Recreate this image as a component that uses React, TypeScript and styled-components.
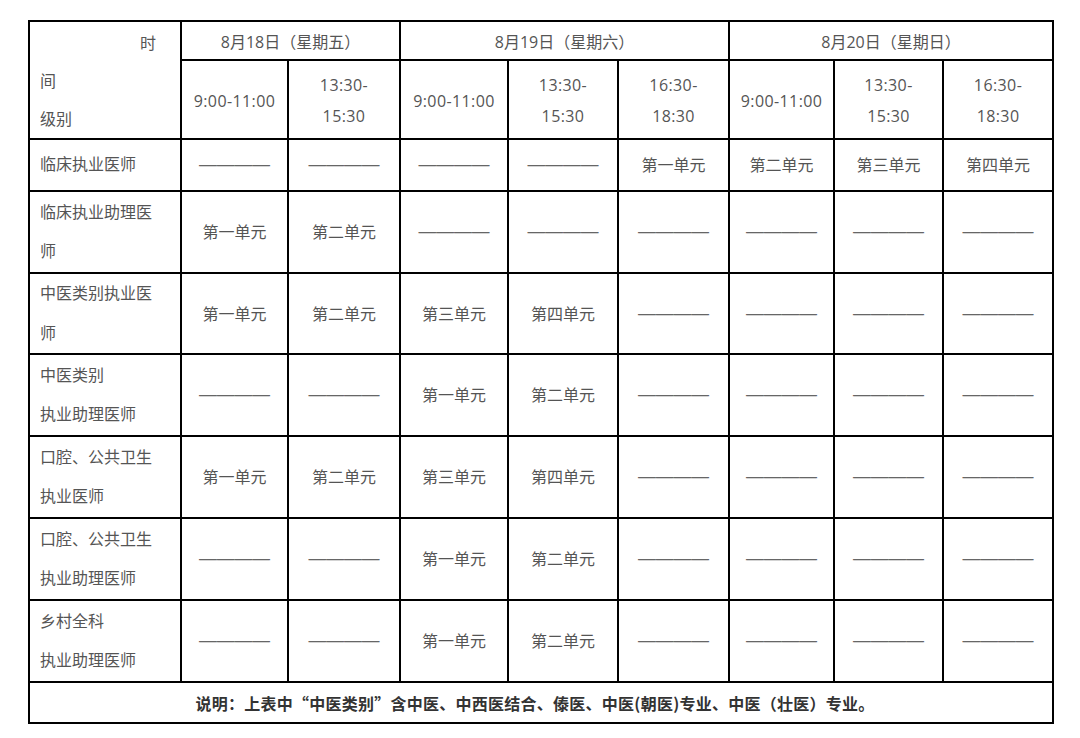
import React from "react";
import styled, { createGlobalStyle } from "styled-components";

const GlobalStyle = createGlobalStyle`
  html, body {
    margin: 0;
    padding: 0;
    background: #ffffff;
  }
  body {
    font-family: "Open Sans", "Noto Sans CJK SC", sans-serif;
  }
`;

const Page = styled.div`
  padding: 20px 0 0 28px;
  width: 1080px;
  height: 738px;
  box-sizing: border-box;
`;

const Table = styled.table`
  border-collapse: collapse;
  table-layout: fixed;
  width: 1025px;
  font-size: 16px;
  color: #555;
  border: 2px solid #111;
`;

const Cell = styled.td<{ $h?: number; $left?: boolean; $lh?: number; $pt?: number; $ls?: number }>`
  border: 2px solid #000;
  height: ${(p) => (p.$h ? `${p.$h}px` : "auto")};
  padding: ${(p) => p.$pt ?? 0}px ${(p) => (p.$left ? "10px" : "4px")} 0;
  text-align: ${(p) => (p.$left ? "left" : "center")};
  vertical-align: middle;
  line-height: ${(p) => p.$lh ?? 39.5}px;
  letter-spacing: ${(p) => p.$ls ?? 0}px;
  font-weight: 400;
  box-sizing: border-box;
  white-space: nowrap;
`;

const CornerLine = styled.div<{ $right?: boolean }>`
  text-align: ${(p) => (p.$right ? "right" : "left")};
  padding-right: ${(p) => (p.$right ? "14px" : "0")};
  line-height: 38px;
`;

const Line = styled.div``;

const Dash = styled.span`
  font-family: "Liberation Sans", sans-serif;
  font-size: 17.75px;
  color: #666;
`;

const Note = styled.td`
  border: 2px solid #000;
  height: 41px;
  text-align: center;
  vertical-align: middle;
  font-family: "Noto Sans CJK SC", sans-serif;
  font-weight: 700;
  color: #333;
  font-size: 16px;
  letter-spacing: 0.25px;
  padding: 0 12px 0 0;
  box-sizing: border-box;
`;

const colWidths = [152, 107, 112, 108, 110, 111, 105, 109, 110];

const times: string[][] = [
  ["9:00-11:00"],
  ["13:30-", "15:30"],
  ["9:00-11:00"],
  ["13:30-", "15:30"],
  ["16:30-", "18:30"],
  ["9:00-11:00"],
  ["13:30-", "15:30"],
  ["16:30-", "18:30"],
];

const days = [
  { label: "8月18日（星期五）", span: 2 },
  { label: "8月19日（星期六）", span: 3 },
  { label: "8月20日（星期日）", span: 3 },
];

const D = "—";
type Row = { label: string[]; h: number; cells: string[] };

const rows: Row[] = [
  { label: ["临床执业医师"], h: 52, cells: [D, D, D, D, "第一单元", "第二单元", "第三单元", "第四单元"] },
  { label: ["临床执业助理医", "师"], h: 82, cells: ["第一单元", "第二单元", D, D, D, D, D, D] },
  { label: ["中医类别执业医", "师"], h: 81, cells: ["第一单元", "第二单元", "第三单元", "第四单元", D, D, D, D] },
  { label: ["中医类别", "执业助理医师"], h: 82, cells: [D, D, "第一单元", "第二单元", D, D, D, D] },
  { label: ["口腔、公共卫生", "执业医师"], h: 82, cells: ["第一单元", "第二单元", "第三单元", "第四单元", D, D, D, D] },
  { label: ["口腔、公共卫生", "执业助理医师"], h: 82, cells: [D, D, "第一单元", "第二单元", D, D, D, D] },
  { label: ["乡村全科", "执业助理医师"], h: 82, cells: [D, D, "第一单元", "第二单元", D, D, D, D] },
];

export default function App() {
  return (
    <>
      <GlobalStyle />
      <Page>
        <Table>
          <colgroup>
            {colWidths.map((w, i) => (
              <col key={i} style={{ width: w }} />
            ))}
          </colgroup>
          <thead>
            <tr>
              <Cell as="th" rowSpan={2} $left $pt={2}>
                <CornerLine $right>时</CornerLine>
                <CornerLine>间</CornerLine>
                <CornerLine>级别</CornerLine>
              </Cell>
              {days.map((d, i) => (
                <Cell as="th" key={i} colSpan={d.span} $h={39} $lh={31} $pt={3}>
                  {d.label}
                </Cell>
              ))}
            </tr>
            <tr>
              {times.map((t, i) => (
                <Cell as="th" key={i} $h={79} $lh={31} $pt={3} $ls={0.4}>
                  {t.map((l, j) => (
                    <Line key={j}>{l}</Line>
                  ))}
                </Cell>
              ))}
            </tr>
          </thead>
          <tbody>
            {rows.map((r, i) => (
              <tr key={i}>
                <Cell $left $h={r.h}>
                  {r.label.map((l, j) => (
                    <Line key={j}>{l}</Line>
                  ))}
                </Cell>
                {r.cells.map((c, j) => (
                  <Cell key={j} $h={r.h} $pt={c === D ? 0 : 2}>
                    {c === D ? <Dash>————</Dash> : c}
                  </Cell>
                ))}
              </tr>
            ))}
            <tr>
              <Note colSpan={9}>
                说明：上表中“中医类别”含中医、中西医结合、傣医、中医(朝医)专业、中医（壮医）专业。
              </Note>
            </tr>
          </tbody>
        </Table>
      </Page>
    </>
  );
}
